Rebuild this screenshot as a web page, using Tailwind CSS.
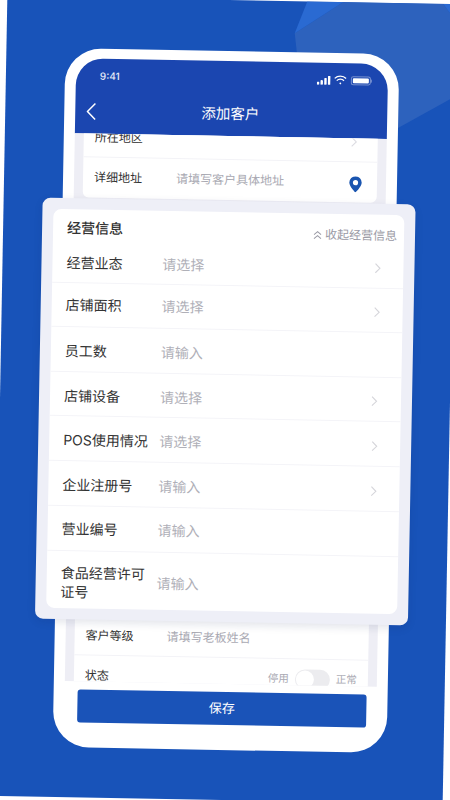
<!DOCTYPE html>
<html>
<head>
    <meta charset="UTF-8"/>
    <meta name="viewport" content="width=device-width, initial-scale=1.0" />
    <title>添加客户</title>
    <script src="https://cdn.jsdelivr.net/npm/@tailwindcss/browser@4"></script>
</head>
<body class="bg-white">
<div class="w-[450px] h-[800px] overflow-hidden bg-white font-['Inter','Noto_Sans_CJK_SC',sans-serif]">
<div class="relative w-[450px] h-[800px] bg-[#1853b9] rotate-[1.05deg] pt-[51px] pl-[59px]">

    <!-- background shapes -->
    <svg class="absolute left-0 top-0" width="450" height="140" viewBox="0 0 450 140">
        <polygon points="288,32 336,0 436,0 450,18 450,92 393,125 300,125" fill="#2d62bd"/>
        <polygon points="300,0 336,0 288,32" fill="#2a6ad2"/>
        <polygon points="436,0 450,0 450,18" fill="#2a6ad2"/>
    </svg>

    <!-- phone -->
    <div class="relative w-[334px] h-[699px] bg-white rounded-[36px] px-[11px] pt-[10px] flex flex-col">
        <div class="h-[75px] bg-[#1b46b0] rounded-t-[27px] text-white shrink-0">
            <div class="flex items-center justify-between h-[34px] pl-[24px] pr-[16px]">
                <span class="text-[10px] font-medium text-white/90">9:41</span>
                <div class="flex items-center gap-[3px]">
                    <svg width="14" height="9" viewBox="0 0 14 9" fill="#fff"><rect x="0" y="6" width="2.4" height="3" rx=".5"/><rect x="3.7" y="4.4" width="2.4" height="4.6" rx=".5"/><rect x="7.4" y="2.2" width="2.4" height="6.8" rx=".5"/><rect x="11.1" y="0" width="2.4" height="9" rx=".5"/></svg>
                    <svg width="13" height="10" viewBox="0 0 13 10" fill="none" stroke="#fff" stroke-width="1.3"><path d="M.8 3.4a8 8 0 0 1 11.4 0"/><path d="M2.9 5.6a5 5 0 0 1 7.2 0"/><circle cx="6.5" cy="8.3" r=".9" fill="#fff" stroke="none"/></svg>
                    <div class="ml-[1px] flex items-center">
                        <div class="w-[20px] h-[9px] rounded-[2.5px] border border-white/40 p-[1px]"><div class="w-full h-full bg-white rounded-[1px]"></div></div>
                        <div class="w-[1px] h-[3px] bg-white/40"></div>
                    </div>
                </div>
            </div>
            <div class="relative flex items-center justify-center h-[38px]">
                <svg class="absolute left-[11px] top-[10px]" width="10" height="18" viewBox="0 0 10 18" fill="none" stroke="#fff" stroke-width="1.5"><path d="M9 1 1.2 9 9 17"/></svg>
                <span class="text-[14.5px] -ml-[2px]">添加客户</span>
            </div>
        </div>

        <div class="h-[548px] bg-[#eeeef5] overflow-hidden px-[9px] shrink-0 text-[12px]">
            <div class="-mt-[16px] bg-white rounded-b-[6px] text-[#333]">
                <div class="h-[40px] flex items-center border-b border-[#f3f3f7] pl-[11px] pr-[20px]">
                    <span class="w-[82px]">所在地区</span>
                    <svg class="ml-auto" width="7" height="11" viewBox="0 0 7 11" fill="none" stroke="#dcdce2" stroke-width="1.1"><path d="m1 1 4.5 4.5L1 10"/></svg>
                </div>
                <div class="h-[40px] flex items-center pl-[11px] pr-[15px]">
                    <span class="w-[82px]">详细地址</span>
                    <span class="text-[#a9a9b2]">请填写客户具体地址</span>
                    <svg class="ml-auto mt-[3px]" width="13" height="16" viewBox="0 0 13 16"><path fill-rule="evenodd" fill="#1a55b0" d="M6.5 0A6.2 6.2 0 0 0 .3 6.2C.3 10.3 6.5 16 6.5 16s6.2-5.7 6.2-9.8A6.2 6.2 0 0 0 6.5 0Zm0 3.700a2.600 2.600 0 1 1 0 5.200 2.600 2.600 0 0 1 0-5.200Z"/></svg>
                </div>
            </div>
            <!-- rows behind the floating card -->
            <div class="h-[418px]"></div>
            <div class="bg-white text-[#333]">
                <div class="h-[40px] flex items-center border-b border-[#f3f3f7] pl-[11px]">
                    <span class="w-[81px]">客户等级</span>
                    <span class="text-[#a9a9b2]">请填写老板姓名</span>
                </div>
                <div class="h-[40px] flex items-center pl-[11px] pr-[11px]">
                    <span>状态</span>
                    <div class="ml-auto flex items-center gap-[6px] text-[10.5px] text-[#a9a9b2]">
                        <span>停用</span>
                        <div class="w-[35px] h-[20px] rounded-full bg-[#ececef] p-[1px]"><div class="w-[18px] h-[18px] rounded-full bg-white"></div></div>
                        <span>正常</span>
                    </div>
                </div>
            </div>
        </div>

        <div class="mt-[8px] ml-[13px] mr-[10px] h-[33px] bg-[#1a53b8] rounded-[3px] flex items-center justify-center text-white text-[13px]">保存</div>
    </div>

    <!-- floating card -->
    <div class="absolute left-[39px] top-[201px] w-[373px] h-[421px] bg-[#eeeff7] rounded-[8px] p-[11px] shadow-[0_3px_8px_rgba(20,30,80,0.12)]">
        <div class="bg-white rounded-[8px] h-[399px] text-[14px] text-[#333]">
            <div class="h-[32px] flex items-center justify-between pl-[14px] pr-[7px] pt-[4px]">
                <span class="font-medium">经营信息</span>
                <div class="flex items-center gap-[3px] text-[12px] text-[#9a9aa5] pt-[6px]">
                    <svg width="9" height="9" viewBox="0 0 9 9" fill="none" stroke="#9a9aa5" stroke-width="1"><path d="m1 4 3.5-3L8 4M1 8l3.5-3L8 8"/></svg>
                    <span>收起经营信息</span>
                </div>
            </div>
            <div class="h-[42px] flex items-center border-b border-[#f4f4f8] pl-[14px] pr-[22px] pt-[2px]">
                <span class="w-[96px]">经营业态</span><span class="text-[#b0b0b8]">请选择</span>
                <svg class="ml-auto" width="7" height="11" viewBox="0 0 7 11" fill="none" stroke="#d5d5da" stroke-width="1.1"><path d="m1 1 4.5 4.5L1 10"/></svg>
            </div>
            <div class="h-[44px] flex items-center border-b border-[#f4f4f8] pl-[14px] pr-[22px]">
                <span class="w-[96px]">店铺面积</span><span class="text-[#b0b0b8]">请选择</span>
                <svg class="ml-auto mt-[3px]" width="7" height="11" viewBox="0 0 7 11" fill="none" stroke="#d5d5da" stroke-width="1.1"><path d="m1 1 4.5 4.5L1 10"/></svg>
            </div>
            <div class="h-[45px] flex items-center border-b border-[#f4f4f8] pl-[14px] pr-[22px] pt-[3px]">
                <span class="w-[96px]">员工数</span><span class="text-[#b0b0b8]">请输入</span>
            </div>
            <div class="h-[44px] flex items-center border-b border-[#f4f4f8] pl-[14px] pr-[23px] pt-[4px]">
                <span class="w-[96px]">店铺设备</span><span class="text-[#b0b0b8]">请选择</span>
                <svg class="ml-auto" width="7" height="11" viewBox="0 0 7 11" fill="none" stroke="#d5d5da" stroke-width="1.1"><path d="m1 1 4.5 4.5L1 10"/></svg>
            </div>
            <div class="h-[45px] flex items-center border-b border-[#f4f4f8] pl-[14px] pr-[22px] pt-[2px]">
                <span class="w-[96px] whitespace-nowrap">POS使用情况</span><span class="text-[#b0b0b8]">请选择</span>
                <svg class="ml-auto mt-[3px]" width="7" height="11" viewBox="0 0 7 11" fill="none" stroke="#d5d5da" stroke-width="1.1"><path d="m1 1 4.5 4.5L1 10"/></svg>
            </div>
            <div class="h-[45px] flex items-center border-b border-[#f4f4f8] pl-[14px] pr-[22px] pt-[2px]">
                <span class="w-[96px]">企业注册号</span><span class="text-[#b0b0b8]">请输入</span>
                <svg class="ml-auto mt-[3px]" width="7" height="11" viewBox="0 0 7 11" fill="none" stroke="#d5d5da" stroke-width="1.1"><path d="m1 1 4.5 4.5L1 10"/></svg>
            </div>
            <div class="h-[45px] flex items-center border-b border-[#f4f4f8] pl-[14px] pr-[22px]">
                <span class="w-[96px]">营业编号</span><span class="text-[#b0b0b8]">请输入</span>
            </div>
            <div class="h-[57px] flex items-center pl-[14px] pr-[22px] pt-[4px]">
                <span class="w-[96px] shrink-0 leading-[19px] pr-[10px]">食品经营许可证号</span><span class="text-[#b0b0b8]">请输入</span>
            </div>
        </div>
    </div>
</div>
</div>
</body>
</html>
